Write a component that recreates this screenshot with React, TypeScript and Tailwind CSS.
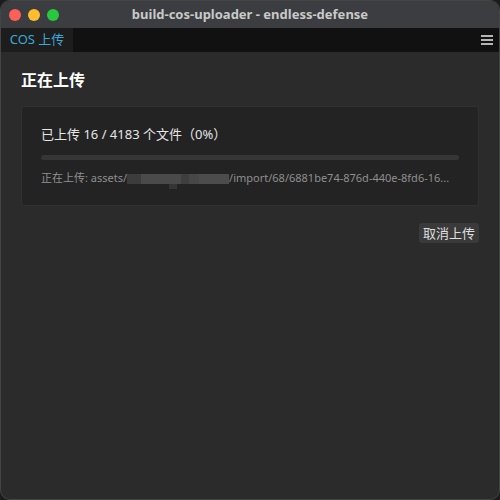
import React from 'react';

const FONT = '"Noto Sans", "Noto Sans CJK SC", "Liberation Sans", sans-serif';

function TrafficLights() {
  return (
    <div className="flex items-center gap-[7px] pl-[8px]">
      <span className="w-3 h-3 rounded-full bg-[#fe5f57]" />
      <span className="w-3 h-3 rounded-full bg-[#febc2e]" />
      <span className="w-3 h-3 rounded-full bg-[#28c840]" />
    </div>
  );
}

// pixelated redaction in the path
function Redacted() {
  return (
    <span className="relative inline-flex h-[10px] items-stretch align-middle">
      <span className="w-[14px] bg-[#3c3c3c]" />
      <span className="w-[40px] bg-[#4a4a4a]" />
      <span className="w-[8px] bg-[#3e3e3e]" />
      <span className="w-[10px] bg-[#474747]" />
      <span className="w-[30px] bg-[#4c4c4c]" />
      <span className="absolute left-[42px] top-[10px] w-[8px] h-[5px] bg-[#353535]" />
    </span>
  );
}

export default function App() {
  return (
    <div className="w-[500px] h-[500px] bg-[#1c1c1c]" style={{ fontFamily: FONT }}>
      <div className="w-full h-full rounded-[10px] overflow-hidden flex flex-col bg-[#2b2b2b] border border-[#444444]">
        {/* title bar */}
        <div className="relative h-[27px] bg-[#3b3d40] flex items-center shrink-0">
          <TrafficLights />
          <div className="absolute inset-0 flex items-center justify-center text-[13px] font-bold text-[#c9c9c9]">
            build-cos-uploader - endless-defense
          </div>
        </div>

        {/* tab bar */}
        <div className="h-[24px] bg-[#111111] flex items-stretch shrink-0">
          <div className="w-[72px] bg-[#1d1d1d] flex items-center justify-center text-[13px] text-[#3ea7d6]">
            COS 上传
          </div>
          <div className="flex-1" />
          <div className="flex flex-col justify-center gap-[2px] pr-[6px]">
            <span className="w-[12px] h-[2px] bg-[#b5b5b5]" />
            <span className="w-[12px] h-[2px] bg-[#b5b5b5]" />
            <span className="w-[12px] h-[2px] bg-[#b5b5b5]" />
          </div>
        </div>

        {/* content */}
        <div className="flex flex-col px-[20px] pt-[16px]">
          <h1 className="text-[16px] font-bold text-white leading-[24px]">正在上传</h1>

          <div className="mt-[14px] bg-[#232323] border border-[#313131] rounded-[3px] px-[19px] pt-[17px] pb-[20px]">
            <div className="text-[13px] text-[#e6e6e6] leading-[20px]">
              已上传 16 / 4183 个文件（0%）
            </div>
            <div className="mt-[11px] h-[5px] rounded-full bg-[#363636]" />
            <div className="mt-[11px] text-[11px] text-[#8f8f8f] leading-[14px] whitespace-nowrap">
              正在上传: assets/<Redacted />/import/68/6881be74-876d-440e-8fd6-16...
            </div>
          </div>

          <div className="flex justify-end mt-[17px]">
            <button className="h-[20px] px-[4px] rounded-[3px] bg-[#3a3a3a] text-[13px] text-[#dedede] leading-[20px]">
              取消上传
            </button>
          </div>
        </div>
      </div>
    </div>
  );
}
